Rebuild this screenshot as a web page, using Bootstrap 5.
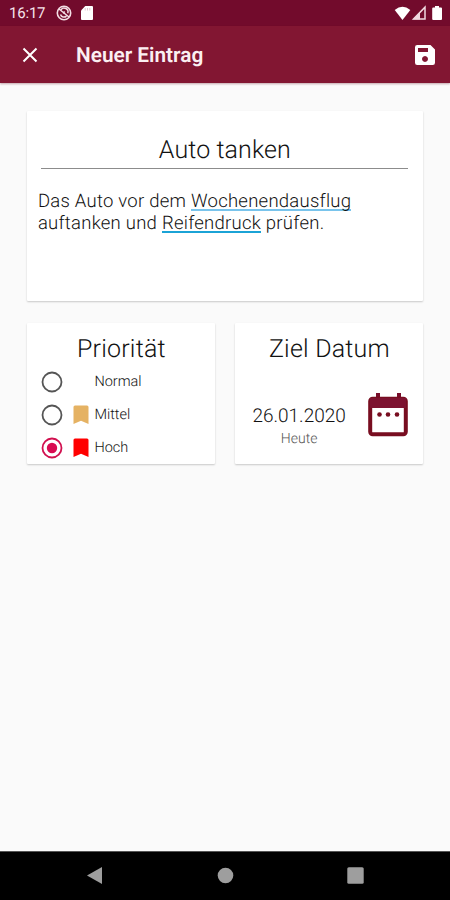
<!DOCTYPE html>
<html lang="de">
<head>
<meta charset="utf-8">
<meta name="viewport" content="width=device-width, initial-scale=1">
<title>Neuer Eintrag</title>
<link href="https://cdn.jsdelivr.net/npm/bootstrap@5.3.0/dist/css/bootstrap.min.css" rel="stylesheet">
<style>
body{font-family:Roboto,sans-serif;background:#fafafa;color:#111;height:900px;overflow:hidden;text-rendering:geometricPrecision}
svg{display:block;flex:none}
.status{height:26px;background:#720b2c;color:#f6e4ea;font-size:15px;padding:0 7px 0 9px}
.status .clock{width:47px;line-height:26px;letter-spacing:-.2px}
.appbar{height:57px;background:#821632;padding:0 14px 0 22px;box-shadow:0 1px 2px rgba(90,0,20,.35)}
.appbar h1{font-size:20.8px;font-weight:600;color:#fbeff2;margin:3px 0 0 38px;line-height:28px}
.icon-btn{border:0;background:none;padding:0;color:#fff}
main{padding:28px 26.600px 0 27.400px}
.tile{background:#fff;border:0;border-radius:1px;box-shadow:0 1px 2px rgba(0,0,0,.2)}
.note{height:190px}
.note-title{margin:23px 15px 0 14px;height:35px;line-height:33px;border-bottom:1px solid #8c8c8c;font-size:25px;font-weight:300;letter-spacing:.1px}
.note-text{margin:21px 10.500px 0;font-size:18.500px;line-height:22px;font-weight:300;letter-spacing:.25px}
.spell{border-bottom:2px solid #79c4ec;display:inline-block;line-height:18px;height:19px}
.spell.strong{border-color:#1ba3d6;font-weight:300}
.pair{margin-top:22px;gap:20px}
.pair .tile{height:141px;flex:1 1 0}
.tile h2{font-size:25px;font-weight:300;line-height:28px;margin:13px 0 1px;letter-spacing:.2px}
.choice{height:33.3px;padding-left:14px;font-size:14.500px;font-weight:300}
.choice span{padding-top:1px}
.choice .flag{width:16px;margin:0 5px 0 10px}
.date-row{padding:27px 15px 0 17px}
.date{font-size:19px;font-weight:300;line-height:22px;margin-top:13px}
.sub{font-size:14px;font-weight:300;line-height:18px;color:#555;margin-top:3px}
.sysnav{height:49px;background:#000;border-top:1px solid #555;padding:0 86px 2px}
</style>
</head>
<body class="d-flex flex-column">
<div class="status d-flex align-items-center">
  <span class="clock">16:17</span>
  <svg width="16" height="16" viewBox="0 0 16 16" fill="none" stroke="#f3dfe5"><circle cx="8" cy="8" r="6.7" stroke-width="1.6"/><path d="M3 4l10 8M4.5 9.5a3.7 3.7 0 0 0 6 1.6M5 4.8a3.8 3.8 0 0 1 6.7 3.5M7.2 8.5l1.5-2" stroke-width="1.5"/></svg>
  <svg class="ms-2" width="14" height="16" viewBox="0 0 14 16"><path d="M5.3 1H12q1 0 1 1v12q0 1-1 1H2q-1 0-1-1V5.500z" fill="#fff"/><path d="M5.200 3v2.500M7.500 3v2.500M9.800 3v2.500" stroke="#d9b9c3" stroke-width=".8"/></svg>
  <div class="ms-auto d-flex align-items-center">
    <svg width="17" height="15" viewBox="0 0 17 15"><path d="M.7 4Q8.500-2.500 16.300 4L8.500 14z" fill="#fff"/></svg>
    <svg width="16" height="16" viewBox="0 0 16 16"><path d="M2.500 14L14 2.200V14z" fill="none" stroke="#f1d9e0" stroke-width="1.500"/><path d="M2 14.500L9 7v7.500z" fill="#f1d9e0"/></svg>
    <svg class="ms-1" width="12" height="16" viewBox="0 0 12 16"><path d="M4 1h4v1.500h2q1 0 1 1V14q0 1-1 1H2.200q-1 0-1-1V3.500q0-1 1-1H4z" fill="#fff"/></svg>
  </div>
</div>
<header class="appbar d-flex align-items-center">
  <button class="icon-btn" aria-label="Schließen"><svg width="16" height="16" viewBox="0 0 16 16"><path d="M1.500 1.500l13 13M14.500 1.500l-13 13" stroke="#fff" stroke-width="2"/></svg></button>
  <h1>Neuer Eintrag</h1>
  <button class="icon-btn ms-auto" aria-label="Speichern"><svg width="22" height="22" viewBox="0 0 22 22"><path fill="#fff" fill-rule="evenodd" d="M3.200 1H16.500L21 5.500V18.800Q21 21 18.800 21H3.200Q1 21 1 18.800V3.200Q1 1 3.200 1zM4 4v4h10V4zM11 12a3 3 0 1 0 .01 0z"/></svg></button>
</header>
<main class="flex-grow-1">
  <section class="tile note card">
    <div class="note-title text-center">Auto tanken</div>
    <p class="note-text">Das Auto vor dem <span class="spell">Wochenendausflug</span><br>auftanken und <span class="spell strong">Reifendruck</span> prüfen.</p>
  </section>
  <div class="pair d-flex">
    <section class="tile card">
      <h2 class="text-center">Priorität</h2>
      <div class="choice d-flex align-items-center"><svg width="22" height="22" viewBox="0 0 22 22"><circle cx="11" cy="11" r="9.500" fill="none" stroke="#555" stroke-width="1.800"/></svg><span class="flag"></span><span>Normal</span></div>
      <div class="choice d-flex align-items-center"><svg width="22" height="22" viewBox="0 0 22 22"><circle cx="11" cy="11" r="9.500" fill="none" stroke="#555" stroke-width="1.800"/></svg><svg class="flag" width="16" height="20" viewBox="0 0 16 20"><path d="M.5 2Q.5.500 2 .500H14Q15.500.500 15.500 2V19L8 15.800.5 19z" fill="#e5b263"/></svg><span>Mittel</span></div>
      <div class="choice d-flex align-items-center"><svg width="22" height="22" viewBox="0 0 22 22"><circle cx="11" cy="11" r="9.500" fill="none" stroke="#d1104f" stroke-width="1.800"/><circle cx="11" cy="11" r="5.200" fill="#d90b52"/></svg><svg class="flag" width="16" height="20" viewBox="0 0 16 20"><path d="M.5 2Q.5.500 2 .500H14Q15.500.500 15.500 2V19L8 15.800.5 19z" fill="#f00"/></svg><span>Hoch</span></div>
    </section>
    <section class="tile card">
      <h2 class="text-center">Ziel Datum</h2>
      <div class="date-row d-flex justify-content-between">
        <div class="text-center"><div class="date">26.01.2020</div><div class="sub">Heute</div></div>
        <svg width="40" height="46" viewBox="0 0 40 46"><path d="M10 1v6M31 1v6" stroke="#780d2a" stroke-width="4"/><rect x="2.200" y="6.700" width="35.600" height="35.600" rx="2.500" fill="#fff" stroke="#780d20" stroke-width="4"/><path d="M2 6h36v10H2z" fill="#7d1230"/><g fill="#780d20"><circle cx="11.500" cy="22.500" r="2.300"/><circle cx="20" cy="22.500" r="2.300"/><circle cx="29" cy="22.500" r="2.300"/></g></svg>
      </div>
    </section>
  </div>
</main>
<nav class="sysnav d-flex align-items-center justify-content-between">
  <svg width="17" height="19" viewBox="0 0 17 19"><path d="M1 9.500L16 1v17z" fill="#9e9e9e"/></svg>
  <svg width="17" height="17" viewBox="0 0 17 17"><circle cx="8.500" cy="8.500" r="7.800" fill="#9e9e9e"/></svg>
  <svg width="17" height="17" viewBox="0 0 17 17"><rect x=".3" y=".3" width="16.400" height="16.400" rx="1.500" fill="#9e9e9e"/></svg>
</nav>
<script src="https://cdn.jsdelivr.net/npm/bootstrap@5.3.0/dist/js/bootstrap.bundle.min.js"></script>
</body>
</html>
